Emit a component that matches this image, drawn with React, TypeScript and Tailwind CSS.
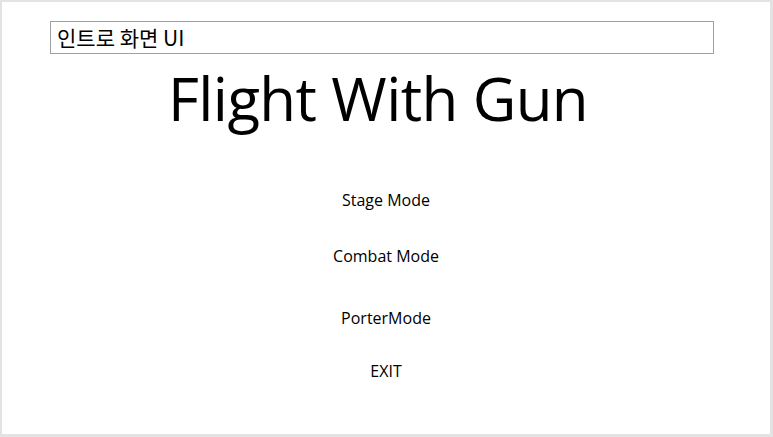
export default function App() {
  return (
    <div className="w-[773px] h-[437px] bg-[#e3e3e3] pt-[2px] pl-[2px] pr-[3px] pb-[3px]" style={{ fontFamily: '"Open Sans", "Noto Sans CJK KR", sans-serif' }}>
      <div className="w-full h-full bg-white flex flex-col">
        <div className="ml-[48px] mt-[19px] w-[664px] h-[33px] border border-[#a0a0a0] flex items-center pl-[6px] text-[21px] text-black leading-none" style={{ fontFamily: '"Noto Sans CJK KR", sans-serif' }}>
          인트로 화면 UI
        </div>
        <div className="mt-[12px] ml-[-16px] text-center text-[60px] leading-[64px] text-black tracking-[-0.6px]">
          Flight With Gun
        </div>
        <div className="flex flex-col items-center text-[16px] text-black leading-[20px]">
          <div className="mt-[60px]">Stage Mode</div>
          <div className="mt-[36px]">Combat Mode</div>
          <div className="mt-[42px]">PorterMode</div>
          <div className="mt-[33px]">EXIT</div>
        </div>
      </div>
    </div>
  );
}
